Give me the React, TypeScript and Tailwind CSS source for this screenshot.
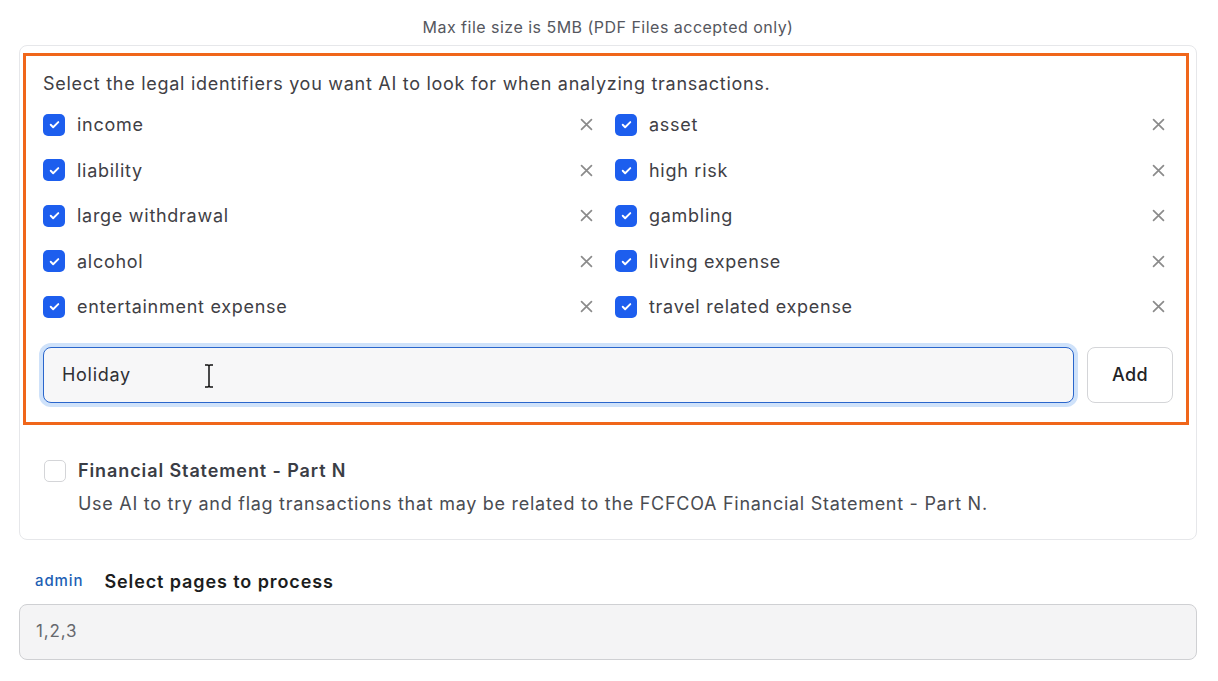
import React from "react";

const identifiers = [
  ["income", "asset"],
  ["liability", "high risk"],
  ["large withdrawal", "gambling"],
  ["alcohol", "living expense"],
  ["entertainment expense", "travel related expense"],
];

const CheckIcon = () => (
  <svg width="13" height="13" viewBox="0 0 24 24" fill="none" stroke="white" strokeWidth="3.5" strokeLinecap="round" strokeLinejoin="round">
    <path d="M5 12.5l4.5 4.5L19 7.5" />
  </svg>
);

const XIcon = () => (
  <svg width="17" height="17" viewBox="0 0 24 24" fill="none" stroke="#8b8b8b" strokeWidth="2.4" strokeLinecap="round">
    <path d="M5 5l14 14M19 5L5 19" />
  </svg>
);

const IdentifierRow = ({ label }: { label: string }) => (
  <div className="flex h-[45.5px] items-center pr-[3px]">
    <span className="flex h-[22px] w-[22px] items-center justify-center rounded-[5px] bg-[#1d5eee]">
      <CheckIcon />
    </span>
    <span className="ml-[12px] text-[18px] tracking-[0.04em] text-[#3f4045]">{label}</span>
    <button className="ml-auto flex h-6 w-6 items-center justify-center">
      <XIcon />
    </button>
  </div>
);

export default function App() {
  return (
    <div className="min-h-[681px] bg-white pl-[19px] pr-[21px] pt-[16px] font-['Inter','Noto_Sans',sans-serif] text-[#3f4045]">
      <p className="text-center text-[16px] leading-[22px] tracking-[0.03em] text-[#55575e]">
        Max file size is 5MB (PDF Files accepted only)
      </p>

      <div className="mt-[7px] rounded-[8px] border border-[#e6e7ea] pl-[3px] pr-[7px] pt-[7px] pb-[22px]">
        <div className="border-[3px] border-[#f0661a] pl-[17px] pr-[13px] pt-[15px] pb-[19px]">
          <p className="text-[18px] leading-[26px] tracking-[0.04em] text-[#3f4045]">
            Select the legal identifiers you want AI to look for when analyzing transactions.
          </p>
          <div className="mt-[5px] grid grid-cols-2 gap-x-[14px]">
            {identifiers.map(([left, right]) => (
              <React.Fragment key={left}>
                <IdentifierRow label={left} />
                <IdentifierRow label={right} />
              </React.Fragment>
            ))}
          </div>
          <div className="mt-[17px] flex gap-[13px]">
            <div className="relative flex h-[56px] flex-1 items-center rounded-[8px] border-[1.5px] border-[#2a66cc] bg-[#f7f7f8] px-[18px] shadow-[0_0_0_4px_#cfe2fa]">
              <span className="text-[18px] tracking-[0.04em] text-[#2f3034]">Holiday</span>
              <svg className="absolute left-[160px] top-[16px]" width="10" height="24" viewBox="0 0 10 24" fill="none" stroke="#111" strokeWidth="1.5">
                <path d="M1 1h3l1 1 1-1h3M5 2v20M1 23h3l1-1 1 1h3" />
              </svg>
            </div>
            <button className="h-[56px] w-[86px] rounded-[8px] border border-[#d4d5d8] bg-white text-[18px] font-medium tracking-[0.02em] text-[#222326]">
              Add
            </button>
          </div>
        </div>

        <div className="mt-[34px] flex px-[21px]">
          <span className="mt-[1px] h-[22px] w-[22px] shrink-0 rounded-[5px] border border-[#d4d5d8] bg-white" />
          <div className="ml-[12px]">
            <p className="text-[18px] font-semibold leading-[24px] tracking-[0.05em] text-[#3a3d45]">Financial Statement - Part N</p>
            <p className="mt-[8px] text-[18px] leading-[26px] tracking-[0.04em] text-[#4a4c52]">
              Use AI to try and flag transactions that may be related to the FCFCOA Financial Statement - Part N.
            </p>
          </div>
        </div>
      </div>

      <div className="mt-[28px] flex items-center px-[16px]">
        <span className="text-[15px] font-medium tracking-[0.06em] text-[#1e5fb5]">admin</span>
        <span className="ml-[21px] text-[18px] font-semibold tracking-[0.05em] text-[#1c1d20]">Select pages to process</span>
      </div>
      <div className="mt-[9px] flex h-[56px] items-center rounded-[8px] border border-[#cfd0d3] bg-[#f4f4f5] px-[16px]">
        <span className="text-[17px] tracking-[0.05em] text-[#66686d]">1,2,3</span>
      </div>
    </div>
  );
}
